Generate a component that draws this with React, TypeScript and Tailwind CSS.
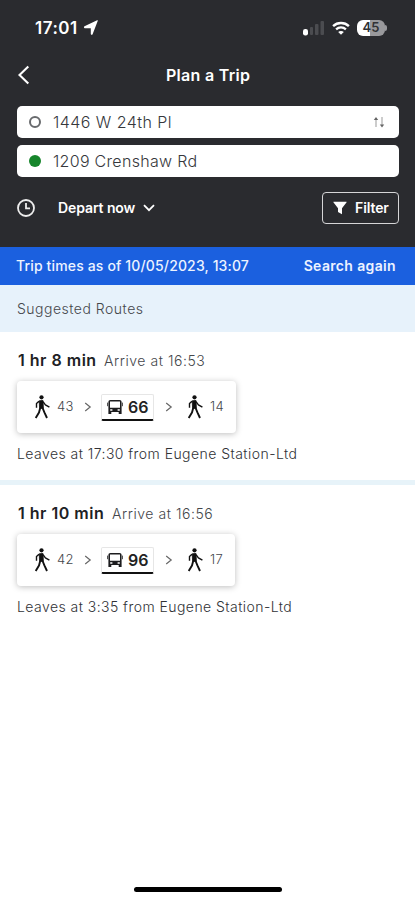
import React from "react";

function WalkIcon() {
  return (
    <svg viewBox="0 0 16 24" className="h-6 w-4 shrink-0" fill="none" stroke="#111" strokeLinejoin="round">
      <circle cx="7.5" cy="2.3" r="2.1" fill="#111" stroke="none" />
      <path d="M5.2 5.8 9 5.4 9.4 13.4H5.6Z" fill="#111" strokeWidth="0.8" />
      <path d="M5 6.2 2.5 8.6v4.2M9 6.6l2.4 3.2 4 2.4" strokeWidth="1.4" />
      <path d="M6.2 13 5 17.6 1.7 23M8.6 13l1.8 4.4L13 23" strokeWidth="1.9" />
    </svg>
  );
}

function BusIcon() {
  return (
    <svg viewBox="0 0 16 16" className="h-4 w-4 shrink-0">
      <path
        fillRule="evenodd"
        fill="#1c1c1e"
        d="M3.5 1h9c1.4 0 2.1.8 2.1 2.2V15h-2.9v-2H4.3v2H1.4V3.2C1.4 1.8 2.1 1 3.5 1ZM3 2.4v6.4h10V2.4ZM3.2 10.3v1.4h2.2v-1.4Zm7.4 0v1.4h2.2v-1.4Z"
      />
      <path d="M.5 3.6v3.6M15.5 3.6v3.6" stroke="#555" />
    </svg>
  );
}

function Chevron() {
  return (
    <svg viewBox="0 0 8 10" className="h-2.5 w-2 shrink-0" fill="none" stroke="#666" strokeWidth="1.2">
      <path d="m1.2 1 5 4-5 4" />
    </svg>
  );
}

interface Route {
  duration: string;
  durationClass: string;
  arrive: string;
  first: string;
  bus: string;
  last: string;
  leaves: string;
  boxClass: string;
}

const routes: Route[] = [
  { duration: "1 hr 8 min", durationClass: "w-[86px]", arrive: "Arrive at 16:53", first: "43", bus: "66", last: "14", leaves: "Leaves at 17:30 from Eugene Station-Ltd", boxClass: "w-[219px]" },
  { duration: "1 hr 10 min", durationClass: "w-[94px]", arrive: "Arrive at 16:56", first: "42", bus: "96", last: "17", leaves: "Leaves at 3:35 from Eugene Station-Ltd", boxClass: "w-[218px]" },
];

function RouteCard({ route }: { route: Route }) {
  return (
    <section className="h-[148px] pl-[17px] pt-[16px]">
      <div className="flex h-6 items-center whitespace-nowrap pl-px">
        <span className={`${route.durationClass} text-[16px] font-semibold tracking-[0.5px] text-[#202124]`}>{route.duration}</span>
        <span className="text-[14px] font-light tracking-[0.55px] text-[#45474b]">{route.arrive}</span>
      </div>
      <div className={`${route.boxClass} mt-[9px] flex h-[52px] items-center rounded-[4px] bg-white pl-[17px] shadow-[0_1px_6px_rgba(0,0,0,0.26)]`}>
        <WalkIcon />
        <span className="ml-[7px] w-[27px] text-[13px] font-light tracking-[0.4px] text-[#45474b]">{route.first}</span>
        <Chevron />
        <div className="ml-[9px] flex h-[27px] w-[53px] items-center rounded-[2px] border border-b-[2.5px] border-[#e6e6e6] border-b-[#111] pl-[5px] pt-px">
          <BusIcon />
          <span className="ml-[5px] text-[16px] font-semibold text-[#222]">{route.bus}</span>
        </div>
        <span className="w-[11px]" />
        <Chevron />
        <span className="w-[14px]" />
        <WalkIcon />
        <span className="ml-[7px] text-[13px] font-light tracking-[0.4px] text-[#45474b]">{route.last}</span>
      </div>
      <p className="mt-[9px] h-6 whitespace-nowrap text-[14px] font-light leading-6 tracking-[0.45px] text-[#303236]">{route.leaves}</p>
    </section>
  );
}

export default function App() {
  return (
    <div className="flex h-[900px] w-[415px] flex-col overflow-hidden bg-white font-['Inter',sans-serif]">
      <header className="h-[247px] shrink-0 bg-[#2a2b2f] text-white">
        <div className="flex h-[56px] items-center pl-[35px] pr-[28px]">
          <span className="pt-[2px] text-[17px] font-semibold tracking-[0.5px]">17:01</span>
          <svg viewBox="0 0 16 16" className="ml-[5px] h-[16px] w-[16px]" fill="white">
            <path d="M14.8.8 9.6 14.3c-.4.9-1.8.7-1.8-.3V8.2H1.8c-1 0-1.2-1.5-.3-1.9L13.6.5c.8-.4 1.5-.4 1.2.3Z" />
          </svg>
          <span className="flex-1" />
          <svg viewBox="0 0 22 16" className="h-[16px] w-[22px]">
            <rect y="9" width="5" height="6.5" rx="2.2" fill="white" />
            <rect x="7" y="7" width="3" height="8" rx="1" fill="#4b4c50" />
            <rect x="12" y="4" width="3.5" height="11" rx="1" fill="#4b4c50" />
            <rect x="17.5" y="1" width="3.5" height="14" rx="1" fill="#4b4c50" />
          </svg>
          <svg viewBox="0 0 18 14" className="ml-[7px] h-[14px] w-[18px]" fill="none" stroke="white">
            <path d="M1.1 5.1C5.5.9 12.5.9 16.9 5.1" strokeWidth="2.4" />
            <path d="M4.1 8.3c2.8-2.6 7-2.6 9.8 0" strokeWidth="2.3" />
            <path d="M9 13.8 6.2 11c1.5-1.4 4.1-1.4 5.6 0Z" fill="white" stroke="none" />
          </svg>
          <div className="ml-[7px] flex h-[16px] w-[28px] items-center justify-center rounded-[6px] bg-[linear-gradient(90deg,#fff_45%,#99999c_45%)]">
            <span className="text-[13px] font-semibold text-[#303135]">45</span>
          </div>
          <span className="h-[6px] w-[2px] rounded-r-full bg-[#99999c]" />
        </div>

        <div className="flex h-[50px] items-start">
          <div className="flex h-[37px] w-full items-center">
            <svg viewBox="0 0 12 20" className="ml-[18px] h-[20px] w-[12px]" fill="none" stroke="white" strokeWidth="2.1">
              <path d="M10.3 1.5 1.5 10l8.8 8.5" />
            </svg>
            <h1 className="ml-[136px] whitespace-nowrap text-[16px] font-semibold tracking-[0.3px]">Plan a Trip</h1>
          </div>
        </div>

        <div className="ml-[17px] flex w-[382px] flex-col gap-[7px] text-[16px] font-light text-[#36383c]">
          <div className="flex h-[32px] items-center rounded-[5px] bg-white pl-[12px] pr-[14px]">
            <span className="h-[12px] w-[12px] rounded-full border-2 border-[#686a6d]" />
            <span className="ml-[12px] flex-1 pb-px tracking-[0.45px]">1446 W 24th Pl</span>
            <svg viewBox="0 0 12 12" className="h-[12px] w-[12px]" fill="none" stroke="#999">
              <path d="M3 11V2" />
              <path d="M9 1v9" />
              <path d="M.8 4 3 1l2.2 3ZM6.8 8.5l2.2 3 2.2-3Z" fill="#666" stroke="none" />
            </svg>
          </div>
          <div className="flex h-[32px] items-center rounded-[5px] bg-white pl-[12px]">
            <span className="h-[12px] w-[12px] rounded-full bg-[#16852b]" />
            <span className="ml-[12px] tracking-[0.3px]">1209 Crenshaw Rd</span>
          </div>
        </div>

        <div className="mt-[15px] flex h-[32px] items-center pl-[17px] pr-[16px]">
          <svg viewBox="0 0 18 18" className="h-[18px] w-[18px]" fill="none" stroke="#eee" strokeWidth="1.8">
            <circle cx="9" cy="9" r="8" />
            <path d="M9 4v5.3h4" />
          </svg>
          <span className="ml-[23px] w-[85px] whitespace-nowrap pb-px text-[14px] font-semibold tracking-[-0.1px]">Depart now</span>
          <svg viewBox="0 0 12 8" className="h-[8px] w-[12px]" fill="none" stroke="white" strokeWidth="1.8">
            <path d="m1 1.2 5 5 5-5" />
          </svg>
          <span className="flex-1" />
          <button className="flex h-[32px] w-[77px] items-center rounded-[4px] border-[1.5px] border-[#d5d5d7] pl-[10px]">
            <svg viewBox="0 0 14 14" className="h-[14px] w-[14px]" fill="white">
              <path d="M.6.7h12.8c.3 0 .4.4.2.6L9 7.2v6L5 11V7.2L.4 1.3C.2 1.1.3.7.6.7Z" />
            </svg>
            <span className="ml-[8px] pb-px text-[14px] font-semibold tracking-[-0.1px]">Filter</span>
          </button>
        </div>
      </header>

      <div className="flex h-[38px] shrink-0 items-center justify-between bg-[#1b60df] pb-px pl-[16px] pr-[19px] text-[14px] text-[#edf3ff]">
        <span className="font-medium tracking-[0.15px]">Trip times as of 10/05/2023, 13:07</span>
        <span className="font-semibold tracking-[0.35px]">Search again</span>
      </div>
      <div className="flex h-[47px] shrink-0 items-center bg-[#e7f2fb] pl-[17px] text-[14px] font-light tracking-[0.5px] text-[#45474b]">Suggested Routes</div>

      <main>
        <RouteCard route={routes[0]} />
        <div className="h-[5px] bg-[#e7f3f9]" />
        <RouteCard route={routes[1]} />
      </main>
      <div className="mx-auto mb-[8px] mt-auto h-[5px] w-[148px] rounded-full bg-black" />
    </div>
  );
}
